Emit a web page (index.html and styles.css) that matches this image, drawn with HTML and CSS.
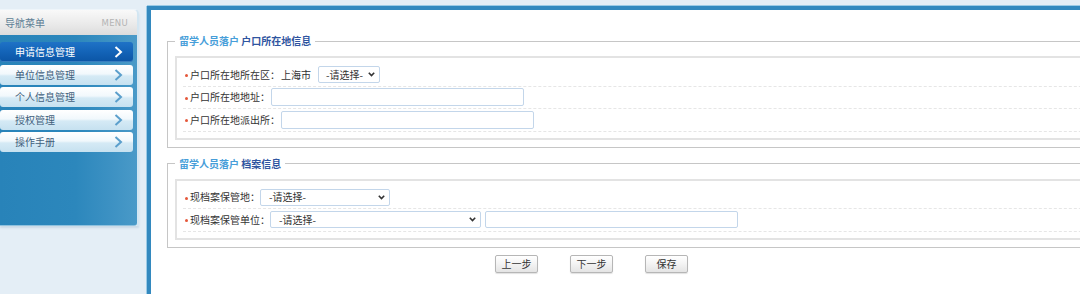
FILE: index.html
```html
<!DOCTYPE html>
<html lang="zh-CN">
<head>
<meta charset="utf-8">
<title>留学人员落户</title>
<link rel="stylesheet" href="styles.css">
</head>
<body>
<div class="page">
  <aside class="sidebar">
    <div class="side-head"><span class="side-title">导航菜单</span><span class="side-menu">MENU</span></div>
    <nav class="side-body">
      <a class="nav-item active"><span>申请信息管理</span><svg class="chev" width="9" height="12" viewBox="0 0 9 12"><polyline points="1.5,1 7,6 1.5,11" fill="none" stroke-width="2"/></svg></a>
      <a class="nav-item"><span>单位信息管理</span><svg class="chev" width="9" height="12" viewBox="0 0 9 12"><polyline points="1.5,1 7,6 1.5,11" fill="none" stroke-width="2"/></svg></a>
      <a class="nav-item"><span>个人信息管理</span><svg class="chev" width="9" height="12" viewBox="0 0 9 12"><polyline points="1.5,1 7,6 1.5,11" fill="none" stroke-width="2"/></svg></a>
      <a class="nav-item"><span>授权管理</span><svg class="chev" width="9" height="12" viewBox="0 0 9 12"><polyline points="1.5,1 7,6 1.5,11" fill="none" stroke-width="2"/></svg></a>
      <a class="nav-item"><span>操作手册</span><svg class="chev" width="9" height="12" viewBox="0 0 9 12"><polyline points="1.5,1 7,6 1.5,11" fill="none" stroke-width="2"/></svg></a>
    </nav>
  </aside>
  <main class="main">
    <fieldset class="group">
      <legend><span class="lg-a">留学人员落户</span> <span class="lg-b">户口所在地信息</span></legend>
      <div class="box">
        <div class="row"><span class="req"></span><span class="label">户口所在地所在区：</span><span class="city">上海市</span><div class="select w62"><span>-请选择-</span><svg width="7" height="5" viewBox="0 0 7 5"><polyline points="0.8,0.8 3.5,3.6 6.2,0.8" fill="none" stroke="#333" stroke-width="1.6"/></svg></div></div>
        <div class="row"><span class="req"></span><span class="label">户口所在地地址：</span><input class="text" type="text"></div>
        <div class="row"><span class="req"></span><span class="label">户口所在地派出所：</span><input class="text" type="text"></div>
      </div>
    </fieldset>
    <fieldset class="group second">
      <legend><span class="lg-a">留学人员落户</span> <span class="lg-b">档案信息</span></legend>
      <div class="box">
        <div class="row"><span class="req"></span><span class="label">现档案保管地：</span><div class="select w130"><span>-请选择-</span><svg width="7" height="5" viewBox="0 0 7 5"><polyline points="0.8,0.8 3.5,3.6 6.2,0.8" fill="none" stroke="#333" stroke-width="1.6"/></svg></div></div>
        <div class="row"><span class="req"></span><span class="label">现档案保管单位：</span><div class="select w211"><span>-请选择-</span><svg width="7" height="5" viewBox="0 0 7 5"><polyline points="0.8,0.8 3.5,3.6 6.2,0.8" fill="none" stroke="#333" stroke-width="1.6"/></svg></div><input class="text after" type="text"></div>
      </div>
    </fieldset>
    <div class="actions">
      <button class="btn">上一步</button>
      <button class="btn">下一步</button>
      <button class="btn">保存</button>
    </div>
  </main>
</div>
</body>
</html>
```

FILE: styles.css
```css
* { box-sizing: border-box; }
html, body { margin: 0; padding: 0; }
body {
  background: #e4eef6;
  font-family: "Noto Sans CJK SC", "Noto Sans", sans-serif;
  font-size: 10px;
  color: #333;
  overflow: hidden;
  height: 294px;
}
.page {
  display: flex;
  align-items: flex-start;
  height: 294px;
}
.sidebar {
  width: 139px;
  flex: none;
  margin-top: 9px;
  border-right: 2px solid #d3e6f2;
  border-top: 1px solid #eef5fa;
  border-top-right-radius: 5px;
  box-shadow: 0 2px 2px rgba(60, 110, 150, 0.15);
}
.side-head {
  height: 25px;
  display: flex;
  align-items: center;
  justify-content: space-between;
  padding: 1px 9px 0 5px;
  background: linear-gradient(#f9f9f9, #e9e9e9 60%, #dcdcdc);
  border-top-right-radius: 4px;
}
.side-title {
  color: #5e7f95;
  font-size: 10px;
  line-height: 12px;
}
.side-menu {
  color: #b4b4b4;
  font-family: "DejaVu Sans", "Liberation Sans", sans-serif;
  font-size: 8.5px;
  letter-spacing: 0.3px;
}
.side-body {
  height: 191px;
  display: flex;
  flex-direction: column;
  gap: 2.5px;
  padding: 7px 4px 0 0;
  background: linear-gradient(to right, #2883b9 0%, #2c87bc 55%, #3c91c3 80%, #4a9ac8 100%);
  border-bottom: 1px solid #8fc1de;
  border-bottom-right-radius: 3px;
}
.nav-item {
  height: 20px;
  display: flex;
  align-items: center;
  justify-content: space-between;
  padding: 0 10px 0 15px;
  border-radius: 3px;
  background: linear-gradient(#ffffff 0%, #f1f8fc 45%, #d5eaf5 55%, #c6e1f0 100%);
  color: #41607c;
  font-size: 10px;
  line-height: 12px;
}
.nav-item .chev { stroke: #5b9fcc; }
.nav-item.active {
  background: linear-gradient(#1f72c6 0%, #1363b7 50%, #0b55a5 100%);
  color: #ffffff;
  box-shadow: inset 0 -1px 0 rgba(140, 200, 240, 0.35);
}
.nav-item.active .chev { stroke: #ffffff; }

.main {
  flex: none;
  width: 1100px;
  height: 300px;
  margin-left: 8px;
  margin-top: 6px;
  background: #ffffff;
  border-top: 4px solid #3389bf;
  border-left: 4px solid #3389bf;
  box-shadow: 0 -1px 0 #9ccbe6, -1px 0 0 #9ccbe6;
  padding: 25px 0 0 16px;
}
.group {
  margin: 0;
  border: 1px solid #c6c6c6;
  padding: 9px 7px 7px 7px;
}
.group.second { margin-top: 10px; }
legend {
  padding: 0 4px;
  font-size: 10px;
  line-height: 12px;
  font-weight: bold;
}
.lg-a { color: #479ed9; }
.lg-b { color: #2f55a0; }
.box {
  border: 2px solid #e3e3e3;
  padding: 6px 0 6px 6px;
}
.row {
  height: 22.5px;
  display: flex;
  align-items: center;
  border-bottom: 1px dashed #e6e6e6;
  padding-left: 2px;
}
.req {
  flex: none;
  width: 3px;
  height: 3px;
  margin: 2px 2px 0 0;
  border-radius: 50%;
  background: #e5573a;
}
.label {
  line-height: 12px;
  color: #333;
  white-space: nowrap;
}
.city {
  line-height: 12px;
  margin-left: 1px;
  margin-right: 7px;
}
.select {
  height: 17px;
  display: flex;
  align-items: center;
  justify-content: space-between;
  padding: 0 4px 0 7px;
  border: 1px solid #c3d6ea;
  border-radius: 2px;
  background: #fff;
  color: #333;
  line-height: 12px;
}
.w62 { width: 62px; }
.w130 { width: 130px; padding-left: 8px; }
.w211 { width: 211px; padding-left: 8px; }
.text {
  width: 253px;
  height: 18px;
  margin: 0 0 0 1px;
  border: 1px solid #c3d6ea;
  border-radius: 2px;
  background: #fff;
  padding: 0;
  outline: none;
}
.text.after { margin-left: 4px; height: 17px; }
.actions {
  display: flex;
  gap: 32px;
  padding-left: 328px;
  margin-top: 7px;
}
.btn {
  width: 43px;
  height: 18px;
  padding: 0;
  border: 1px solid #b6b6b6;
  border-radius: 2px;
  background: linear-gradient(#ffffff, #f3f3f3 50%, #e4e4e4);
  box-shadow: 0 1px 1px rgba(0, 0, 0, 0.12);
  font-family: "Noto Sans CJK SC", "Noto Sans", sans-serif;
  font-size: 10px;
  line-height: 12px;
  color: #333;
}
```
